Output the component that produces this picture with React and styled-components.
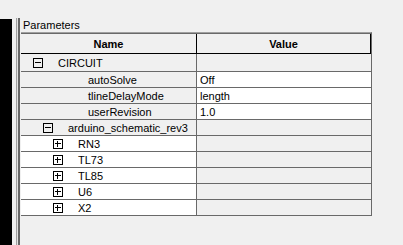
import React from "react";
import styled, { createGlobalStyle } from "styled-components";

const GlobalStyle = createGlobalStyle`
  html, body {
    margin: 0;
    padding: 0;
    background: #f0f0f0;
  }
  body {
    font-family: "Liberation Sans", Arial, sans-serif;
    font-size: 11px;
    color: #000;
  }
`;

const Page = styled.div`
  display: flex;
  height: 245px;
  overflow: hidden;
  background: #f0f0f0;
`;

const DarkPane = styled.div`
  flex: none;
  width: 12px;
  margin-top: 19px;
  background: #000;
`;

const Panel = styled.div`
  flex: 1;
  margin-left: 4px;
  margin-top: 18px;
  padding-left: 5px;
  display: flex;
  flex-direction: column;
  box-shadow: inset 1px 0 #a0a0a0, inset 2px 0 #e3e3e3, inset 4px 0 #696969;
`;

const Title = styled.div`
  height: 14px;
  line-height: 14px;
  padding-left: 2px;
`;

const Table = styled.div`
  box-sizing: border-box;
  width: 351px;
  border-top: 1px solid #a0a0a0;
  border-right: 1px solid #696969;
`;

const HeaderRow = styled.div`
  display: grid;
  grid-template-columns: 176px 174px;
  border-top: 1px solid #696969;
`;

const HeaderCell = styled.div`
  box-sizing: border-box;
  height: 20px;
  line-height: 20px;
  text-align: center;
  font-weight: bold;
  border-right: 1px solid #000;
  border-bottom: 1px solid #000;
  background: #f0f0f0;
`;

const Row = styled.div`
  display: grid;
  grid-template-columns: 176px 174px;
  height: ${(p) => (p.$tall ? 18 : 16)}px;
`;

const NameCell = styled.div`
  box-sizing: border-box;
  display: flex;
  align-items: center;
  gap: 15px;
  padding-left: ${(p) => p.$indent}px;
  white-space: nowrap;
  overflow: hidden;
  background: ${(p) => (p.$white ? "#fff" : "#f0f0f0")};
  border-right: 1px solid #696969;
  border-bottom: 1px solid #696969;
`;

const ValueCell = styled.div`
  box-sizing: border-box;
  display: flex;
  align-items: center;
  padding-left: 3px;
  background: ${(p) => (p.$white ? "#fff" : "#f0f0f0")};
  border-bottom: 1px solid #696969;
`;

const Expander = ({ open }) => (
  <svg width="10" height="10" viewBox="0 0 10 10" style={{ flex: "none" }}>
    <rect x="0.5" y="0.5" width="9" height="9" fill="none" stroke="#000" />
    <line x1="2" y1="4.5" x2="8" y2="4.5" stroke="#000" />
    {!open && <line x1="4.5" y1="2" x2="4.5" y2="8" stroke="#000" />}
  </svg>
);

const rows = [
  { kind: "group", level: 0, open: true, name: "CIRCUIT" },
  { kind: "prop", name: "autoSolve", value: "Off" },
  { kind: "prop", name: "tlineDelayMode", value: "length" },
  { kind: "prop", name: "userRevision", value: "1.0" },
  { kind: "group", level: 1, open: true, name: "arduino_schematic_rev3" },
  { kind: "group", level: 2, open: false, name: "RN3" },
  { kind: "group", level: 2, open: false, name: "TL73" },
  { kind: "group", level: 2, open: false, name: "TL85" },
  { kind: "group", level: 2, open: false, name: "U6" },
  { kind: "group", level: 2, open: false, name: "X2" },
];

export default function App() {
  return (
    <>
      <GlobalStyle />
      <Page>
        <DarkPane />
        <Panel>
          <Title>Parameters</Title>
          <Table>
            <HeaderRow>
              <HeaderCell>Name</HeaderCell>
              <HeaderCell>Value</HeaderCell>
            </HeaderRow>
            {rows.map((r, i) =>
              r.kind === "group" ? (
                <Row key={i} $tall={i === 0}>
                  <NameCell $indent={12 + r.level * 10} $white={!r.open}>
                    <Expander open={r.open} />
                    <span>{r.name}</span>
                  </NameCell>
                  <ValueCell />
                </Row>
              ) : (
                <Row key={i}>
                  <NameCell $indent={67}>{r.name}</NameCell>
                  <ValueCell $white>{r.value}</ValueCell>
                </Row>
              )
            )}
          </Table>
        </Panel>
      </Page>
    </>
  );
}
